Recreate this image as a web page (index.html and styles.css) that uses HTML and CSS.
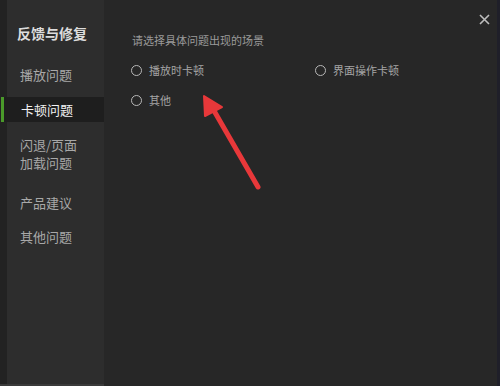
FILE: index.html
```html
<!DOCTYPE html>
<html lang="zh-CN">
<head>
    <meta charset="UTF-8">
    <title>反馈与修复</title>
    <link rel="stylesheet" href="styles.css">
</head>
<body>
    <div class="dialog">
        <aside class="sidebar">
            <h2 class="sidebar-title">反馈与修复</h2>
            <ul class="menu">
                <li class="menu-item">播放问题</li>
                <li class="menu-item active">卡顿问题</li>
                <li class="menu-item two-line">闪退/页面<br>加载问题</li>
                <li class="menu-item">产品建议</li>
                <li class="menu-item">其他问题</li>
            </ul>
        </aside>
        <main class="content">
            <p class="hint">请选择具体问题出现的场景</p>
            <div class="options">
                <label class="option"><span class="radio"></span>播放时卡顿</label>
                <label class="option"><span class="radio"></span>界面操作卡顿</label>
                <label class="option"><span class="radio"></span>其他</label>
            </div>
            <span class="close">
                <svg width="11" height="11" viewBox="0 0 11 11"><path d="M1 1L10 10M10 1L1 10" stroke="#bdbdbd" stroke-width="1.6"/></svg>
            </span>
        </main>
        <svg class="arrow" width="500" height="386" viewBox="0 0 500 386">
            <line x1="258" y1="187" x2="213" y2="109" stroke="#e8383a" stroke-width="5" stroke-linecap="round"/>
            <polygon points="204,96 205,116 222,107" fill="#e8383a" stroke="#e8383a" stroke-width="2" stroke-linejoin="round"/>
        </svg>
    </div>
</body>
</html>
```

FILE: styles.css
```css
body {
    margin: 0;
    background-color: #272727;
    font-family: "Noto Sans CJK SC", "Noto Sans", sans-serif;
}
.dialog {
    position: relative;
    display: flex;
    width: 500px;
    height: 386px;
    box-sizing: border-box;
    border-right: 3px solid #1f1f29;
}
.sidebar {
    width: 104px;
    background: linear-gradient(to right, #222222 7px, #2d2d2d 7px);
    border-bottom: 2px solid #3a3a3a;
    box-sizing: border-box;
}
.sidebar-title {
    margin: 23px 0 0 17px;
    font-size: 14px;
    font-weight: bold;
    line-height: 20px;
    color: #dcdcdc;
}
.menu {
    list-style: none;
    margin: 20px 0 0;
    padding: 0;
}
.menu-item {
    padding: 0 0 0 20px;
    height: 34px;
    line-height: 24px;
    font-size: 13px;
    color: #a8a8a8;
}
.menu-item.active {
    height: 25px;
    line-height: 25px;
    margin-bottom: 14px;
    color: #f2f2f2;
    background-color: #1e1e1e;
    border-left: 3px solid #4a9a2a;
    padding-left: 17px;
    margin-left: 1px;
}
.menu-item.two-line {
    height: 55px;
    line-height: 18px;
}
.content {
    flex: 1;
    position: relative;
    padding: 30px 0 0 28px;
}
.hint {
    margin: 0;
    font-size: 11px;
    line-height: 20px;
    color: #9a9a9a;
}
.options {
    display: grid;
    grid-template-columns: 184px 160px;
    row-gap: 10px;
    margin-top: 10px;
    margin-left: -1px;
}
.option {
    display: flex;
    align-items: center;
    height: 20px;
    font-size: 11px;
    color: #a5a5a5;
}
.radio {
    width: 9px;
    height: 9px;
    border: 1px solid #b8b8b8;
    border-radius: 50%;
    margin-right: 7px;
}
.close {
    position: absolute;
    top: 6px;
    right: 7px;
}
.arrow {
    position: absolute;
    left: 0;
    top: 0;
    pointer-events: none;
}
```
